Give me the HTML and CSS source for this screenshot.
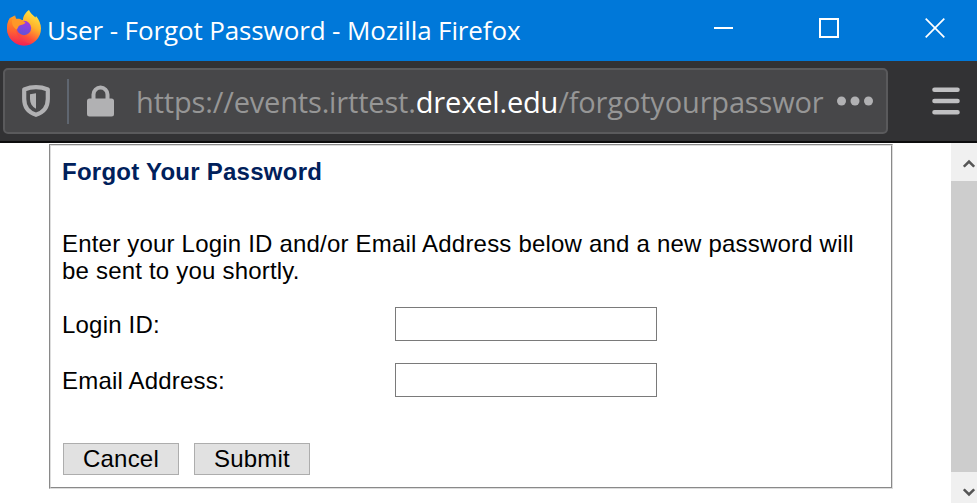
FILE: index.html
```html
<!DOCTYPE html>
<html lang="en">
<head>
    <meta charset="UTF-8">
    <title>User - Forgot Password - Mozilla Firefox</title>
    <link rel="stylesheet" href="styles.css">
</head>
<body>
    <div class="window">
        <div class="title-bar">
            <svg class="logo" viewBox="0 0 34 36">
                <defs>
                    <linearGradient id="flame" x1="0.85" y1="0" x2="0.3" y2="1">
                        <stop offset="0" stop-color="#fff04a"/>
                        <stop offset="0.4" stop-color="#ffb22b"/>
                        <stop offset="0.7" stop-color="#ff5038"/>
                        <stop offset="1" stop-color="#e5177b"/>
                    </linearGradient>
                    <linearGradient id="globe" x1="0.6" y1="0" x2="0.3" y2="1">
                        <stop offset="0" stop-color="#a239e0"/>
                        <stop offset="1" stop-color="#5c55d8"/>
                    </linearGradient>
                    <linearGradient id="fox" x1="0" y1="0" x2="0" y2="1">
                        <stop offset="0" stop-color="#ff9a1f"/>
                        <stop offset="0.5" stop-color="#ff6a2c"/>
                        <stop offset="1" stop-color="#f5204f"/>
                    </linearGradient>
                </defs>
                <path d="M22 0c1 3 4 5 6.500 7.500l.5-1.500c3 3.500 5 8 5 12.500a17 17 0 0 1-34 0c0-4 1-8 3-10.500L7 6l3 5 6-1c0-4 3-8 6-10z" fill="url(#flame)"/>
                <path d="M3 8c-2 2.500-3 6.500-3 10.500a17 17 0 0 0 25 15c-6 0-16-4-16-15l2-8-4-4.500-1 3z" fill="url(#fox)" opacity=".8"/>
                <circle cx="17" cy="18" r="7.200" fill="url(#globe)"/>
                <path d="M5 10l3-5 1 4c3-.5 5 0 6.500 1.500l3 2c-1 2-4 2-6 3s-1 3-3 4c-3-2-5-5-4.500-9.500z" fill="#ff9828"/>
            </svg>
            <span class="window-title">User - Forgot Password - Mozilla Firefox</span>
            <div class="window-buttons">
                <svg width="20" height="20" viewBox="0 0 20 20"><path d="M1 10h19" stroke="#fff" stroke-width="2"/></svg>
                <svg width="20" height="20" viewBox="0 0 20 20"><rect x="1" y="1" width="18" height="18" fill="none" stroke="#fff" stroke-width="2"/></svg>
                <svg width="20" height="20" viewBox="0 0 20 20"><path d="M.7.7l18.600 18.600M19.300.7L.7 19.300" stroke="#fff" stroke-width="1.700"/></svg>
            </div>
        </div>
        <div class="toolbar">
            <div class="url-bar">
                <svg class="shield" width="28" height="32" viewBox="0 0 28 32">
                    <path d="M14 2.200c4 0 8 .8 11.800 2.300v9.500c0 8-4.500 13.500-11.800 15.800C6.700 27.500 2.200 22 2.200 14V4.500C6 3 10 2.200 14 2.200z" fill="none" stroke="#b1b1b3" stroke-width="4.200" stroke-linejoin="round"/>
                    <path d="M14 8.200v15.600c-4-2-6-5.300-6-10V9.200z" fill="#b1b1b3"/>
                </svg>
                <span class="divider"></span>
                <svg class="lock" width="27" height="32" viewBox="0 0 27 32">
                    <path d="M6.500 15V9.500a7 7 0 0 1 14 0V15" fill="none" stroke="#b1b1b3" stroke-width="4"/>
                    <rect y="13.500" width="27" height="18" rx="2.500" fill="#b1b1b3"/>
                </svg>
                <span class="url">https://events.irttest.<span class="domain">drexel.edu</span>/forgotyourpasswor</span>
                <svg class="dots" width="36" height="10" viewBox="0 0 36 10" fill="#b1b1b3">
                    <circle cx="4.500" cy="5" r="4.500"/>
                    <circle cx="18" cy="5" r="4.500"/>
                    <circle cx="31.500" cy="5" r="4.500"/>
                </svg>
            </div>
            <svg class="menu" width="28" height="28" viewBox="0 0 28 28" stroke="#c0c0c2" stroke-width="4.600" stroke-linecap="round">
                <path d="M2.500 2.700h23M2.500 14h23M2.500 25.300h23"/>
            </svg>
        </div>
        <div class="page">
            <form class="panel">
                <h1>Forgot Your Password</h1>
                <p>Enter your Login ID and/or Email Address below and a new password will be sent to you shortly.</p>
                <div class="field">
                    <label for="login">Login ID:</label>
                    <input type="text" id="login">
                </div>
                <div class="field">
                    <label for="email">Email Address:</label>
                    <input type="text" id="email">
                </div>
                <div class="buttons">
                    <button type="button">Cancel</button>
                    <button type="button">Submit</button>
                </div>
            </form>
            <div class="scrollbar">
                <div class="arrow-up">
                    <svg width="12" height="9" viewBox="0 0 12 9"><path d="M.8 7.700L6 2.500l5.200 5.200" fill="none" stroke="#555" stroke-width="2.600"/></svg>
                </div>
                <div class="thumb"></div>
                <div class="arrow-down">
                    <svg width="12" height="9" viewBox="0 0 12 9"><path d="M.8 1.300L6 6.500l5.200-5.200" fill="none" stroke="#555" stroke-width="2.600"/></svg>
                </div>
            </div>
        </div>
    </div>
</body>
</html>
```

FILE: styles.css
```css
* {
    box-sizing: border-box;
}

body {
    margin: 0;
    background-color: #fff;
    font-family: "Liberation Sans", Arial, sans-serif;
    font-size: 24px;
    color: #000;
}

svg {
    display: block;
    flex: none;
}

.window {
    display: flex;
    flex-direction: column;
    width: 977px;
    height: 503px;
    overflow: hidden;
}

.title-bar {
    display: flex;
    height: 61px;
    flex: none;
    padding-left: 7px;
    background-color: #0078d9;
}

.logo {
    width: 34px;
    height: 36px;
    margin-top: 10px;
}

.window-title {
    margin-left: 6px;
    line-height: 61px;
    font-family: "Open Sans", "Noto Sans", sans-serif;
    font-size: 26px;
    letter-spacing: -0.12px;
    white-space: nowrap;
    color: #fff;
}

.window-buttons {
    display: flex;
    gap: 86px;
    margin-left: auto;
    padding: 18px 32px 0 0;
}

.toolbar {
    display: flex;
    height: 82px;
    flex: none;
    padding: 7px 17px 0 3px;
    background-color: #323234;
    border-bottom: 2px solid #0c0c0d;
}

.url-bar {
    display: flex;
    align-items: center;
    width: 885px;
    height: 66px;
    padding-left: 17px;
    background-color: #474749;
    border: 2px solid #5a5a5c;
    border-radius: 5px;
}

.divider {
    width: 2px;
    height: 45px;
    margin: 0 18px 0 17px;
    background-color: #5f6670;
}

.url {
    width: 690px;
    margin-left: 22px;
    font-family: "Open Sans", "Noto Sans", sans-serif;
    font-size: 29px;
    letter-spacing: -0.16px;
    white-space: nowrap;
    color: #969696;
}

.domain {
    color: #fff;
}

.dots {
    margin-left: 11px;
}

.menu {
    margin: 19px 0 0 auto;
}

.page {
    display: flex;
    justify-content: space-between;
    flex: 1;
    padding-left: 49px;
}

.panel {
    width: 844px;
    height: 345px;
    margin-top: 1px;
    padding: 12px 11px 0;
    border: 2px groove #ddd;
    letter-spacing: 0.2px;
}

h1 {
    margin: 0 0 44px;
    font-size: 24px;
    line-height: 28px;
    letter-spacing: 0.25px;
    color: #00205b;
}

p {
    margin: 0 0 23px;
    padding-right: 20px;
    line-height: 27px;
}

.field {
    display: flex;
    align-items: center;
    height: 34px;
    margin-bottom: 22px;
}

.field label {
    width: 333px;
    padding-top: 1px;
}

.field input {
    width: 262px;
    height: 34px;
    border: 1px solid #7a7a7a;
    background-color: #fff;
}

.buttons {
    display: flex;
    gap: 15px;
    margin: 46px 0 0 1px;
}

.buttons button {
    width: 116px;
    height: 32px;
    padding: 0;
    border: 1px solid #adadad;
    background-color: #e1e1e1;
    font: inherit;
    letter-spacing: 0.2px;
    color: #000;
}

.scrollbar {
    display: flex;
    flex-direction: column;
    width: 26px;
    background-color: #f0f0f0;
}

.arrow-up {
    height: 38px;
    padding: 16px 0 0 12px;
}

.thumb {
    height: 291px;
    background-color: #cdcdcd;
}

.arrow-down {
    padding: 16px 0 0 12px;
}
```
